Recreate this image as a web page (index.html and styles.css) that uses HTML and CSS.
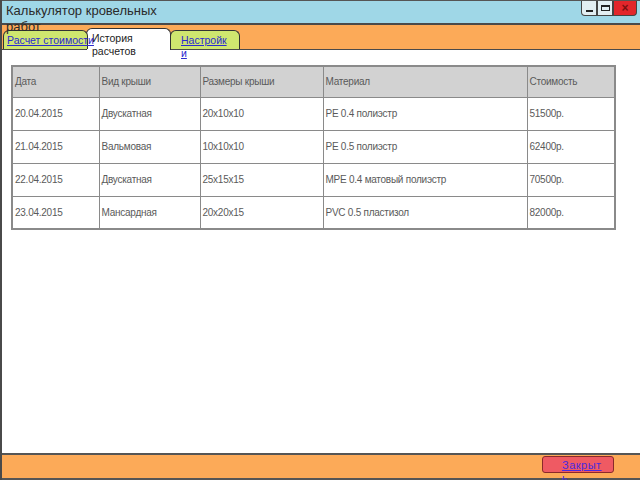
FILE: index.html
```html
<!DOCTYPE html>
<html lang="ru">
<head>
<meta charset="utf-8">
<title>Калькулятор кровельных работ</title>
<link rel="stylesheet" href="styles.css">
</head>
<body>
<div class="window">
  <div class="titlebar">
    <div class="title">Калькулятор кровельных работ</div>
    <div class="winbtns">
      <span class="wbtn"><span class="min"></span></span>
      <span class="wbtn"><span class="max"></span></span>
      <span class="wbtn close">×</span>
    </div>
  </div>
  <div class="tabbar">
    <div class="tab tab-green tab-first"><a href="#">Расчет стоимости</a></div>
    <div class="tab tab-active">История расчетов</div>
    <div class="tab tab-green tab-settings"><a href="#">Настройки</a></div>
  </div>
  <div class="content">
    <table class="history">
      <thead>
        <tr><th class="c1">Дата</th><th class="c2">Вид крыши</th><th class="c3">Размеры крыши</th><th class="c4">Материал</th><th class="c5">Стоимость</th></tr>
      </thead>
      <tbody>
        <tr><td>20.04.2015</td><td>Двускатная</td><td>20x10x10</td><td>PE 0.4 полиэстр</td><td>51500р.</td></tr>
        <tr><td>21.04.2015</td><td>Вальмовая</td><td>10x10x10</td><td>PE 0.5 полиэстр</td><td>62400р.</td></tr>
        <tr><td>22.04.2015</td><td>Двускатная</td><td>25x15x15</td><td>MPE 0.4 матовый полиэстр</td><td>70500р.</td></tr>
        <tr><td>23.04.2015</td><td>Мансардная</td><td>20x20x15</td><td>PVC 0.5 пластизол</td><td>82000р.</td></tr>
      </tbody>
    </table>
  </div>
  <div class="footer">
    <div class="closebtn"><a href="#">Закрыть</a></div>
  </div>
</div>
</body>
</html>
```

FILE: styles.css
```css
* { box-sizing: border-box; }
html, body { margin: 0; padding: 0; background: #fff; }
body { font-family: "Liberation Sans", Arial, sans-serif; }

.window {
  width: 640px;
  height: 480px;
  display: flex;
  flex-direction: column;
  border-left: 2px solid #4a4a4a;
}

.titlebar {
  height: 25px;
  flex: none;
  background: #9fd7e7;
  border-top: 1px solid #555;
  border-bottom: 2px solid #4a4a4a;
  display: flex;
  justify-content: space-between;
  align-items: flex-start;
  position: relative;
  z-index: 2;
}
.title {
  width: 165px;
  padding: 2px 0 0 4px;
  font-size: 13px;
  line-height: 16px;
  color: #2a2a2a;
}
.winbtns {
  display: flex;
  margin-right: 3px;
}
.wbtn {
  width: 16px;
  height: 15px;
  border: 1px solid #444;
  border-top: none;
  background: #e2eef2;
  display: flex;
  align-items: center;
  justify-content: center;
}
.wbtn:first-child { border-radius: 0 0 0 4px; }
.wbtn .min { width: 7px; height: 2px; background: #222; margin-top: 5px; }
.wbtn .max { width: 9px; height: 6px; border: 1px solid #222; border-top-width: 2px; }
.wbtn.close {
  width: 24px;
  background: #e2262b;
  color: #7a1010;
  font-size: 12px;
  font-weight: bold;
  border-radius: 0 0 4px 0;
  line-height: 1;
}

.tabbar {
  height: 25px;
  flex: none;
  background: #fcaa58;
  border-bottom: 1px solid #4a4a4a;
  display: flex;
  align-items: flex-end;
  padding-left: 1px;
  position: relative;
  z-index: 1;
}
.tab {
  height: 20px;
  border: 1px solid #333;
  border-bottom: none;
  border-radius: 6px 6px 0 0;
  font-size: 10.5px;
  line-height: 13px;
  padding: 3px 0 0 3px;
  margin-bottom: -1px;
}
.tab a { color: #2a2ad0; text-decoration: underline; }
.tab-green { background: #cfe66f; height: 19px; margin-bottom: 0; }
.tab-first { width: 85px; white-space: nowrap; position: relative; z-index: 3; }
.tab-active {
  width: 85px;
  height: 22px;
  background: #fff;
  color: #222;
  padding-left: 5px;
  margin-left: -2px;
  position: relative;
  z-index: 2;
}
.tab-settings { width: 70px; padding: 3px 8px 0 10px; margin-left: -1px; word-break: break-all; }

.content {
  flex: 1;
  background: #fff;
  padding: 15px 0 0 9px;
}

.history {
  border-collapse: collapse;
  width: 605px;
  font-size: 10px;
  letter-spacing: -0.25px;
  color: #5a5a5a;
  border: 2px solid #8a8a8a;
}
.history th, .history td {
  border: 1px solid #8a8a8a;
  height: 33px;
  text-align: left;
  font-weight: normal;
  padding: 0 0 0 2px;
}
.history th { background: #d2d2d2; height: 31px; }
.history .c1 { width: 87px; }
.history .c2 { width: 101px; }
.history .c3 { width: 123px; }
.history .c4 { width: 204px; }

.footer {
  height: 27px;
  flex: none;
  background: #fcaa58;
  border-top: 2px solid #555;
  border-bottom: 2px solid #555;
  display: flex;
  justify-content: flex-end;
  align-items: flex-start;
  padding-right: 26px;
}
.closebtn {
  width: 72px;
  height: 17px;
  margin-top: 1px;
  background: #ef5a63;
  border: 1px solid #8a2a2a;
  border-radius: 3px;
  font-size: 11px;
  line-height: 13px;
  padding: 2px 0 0 19px;
}
.closebtn a { color: #4a2adf; text-decoration: underline; letter-spacing: 0.5px; display: block; width: 40px; word-break: break-all; }
```
